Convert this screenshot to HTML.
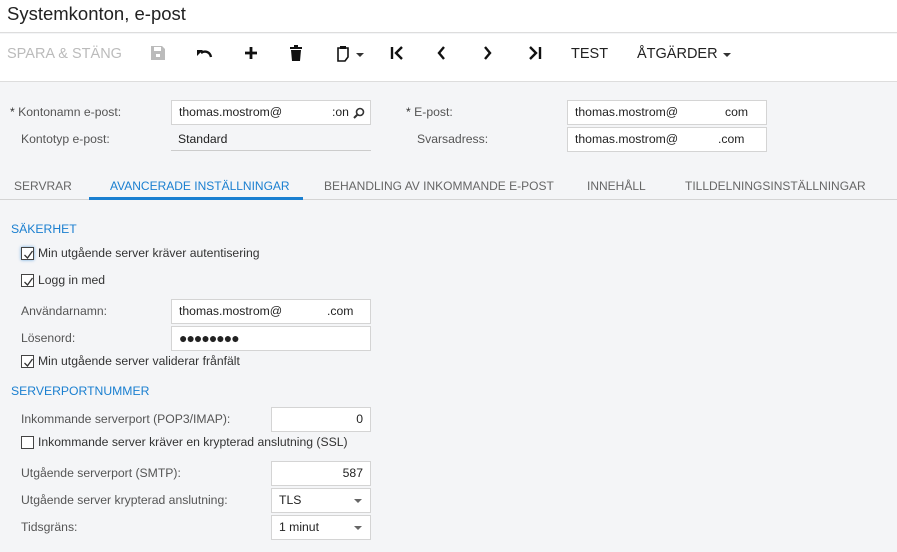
<!DOCTYPE html>
<html><head><meta charset="utf-8"><style>
*{margin:0;padding:0;box-sizing:border-box}
body{width:897px;height:552px;overflow:hidden;background:#f4f5f7;font-family:"Liberation Sans",Arial,sans-serif;font-size:12.2px;color:#333;position:relative}
.a{position:absolute;white-space:nowrap}
.lbl{color:#555}
.box{position:absolute;background:#fff;border:1px solid #d4d4d4;height:25px;padding:0 7px;line-height:23px;color:#222;white-space:nowrap;overflow:hidden}
.cb{position:absolute;width:13px;height:13px;border:1px solid #444;background:#fff}
.cb svg{position:absolute;left:1px;top:1px}
.sec{color:#1a7fd0;font-size:12.2px}
.tab{position:absolute;top:179px;color:#666;font-size:12px}
.ic{position:absolute;top:45px}
.caret{position:absolute;width:0;height:0;border-left:4px solid transparent;border-right:4px solid transparent;border-top:4px solid #666}
</style></head><body>
<div class="a" style="left:0;top:0;width:897px;height:33px;background:#fff;border-bottom:1px solid #ddd"></div>
<div class="a" style="left:7px;top:3px;font-size:18.5px;color:#222">Systemkonton, e-post</div>
<div class="a" style="left:0;top:34px;width:897px;height:48px;background:#fff;border-bottom:1px solid #ddd"></div>
<div class="a" style="left:7px;top:46px;font-size:14.5px;color:#bbb">SPARA &amp; STÄNG</div>
<svg class="ic" style="left:150px" width="16" height="16" viewBox="0 0 16 16"><path d="M1 1h11l3 3v11H1z" fill="#bbb"/><rect x="4" y="2" width="7" height="4" fill="#fff"/><rect x="6" y="9" width="4" height="3" fill="#fff"/></svg>
<svg class="ic" style="left:196px" width="18" height="16" viewBox="0 0 18 16"><path d="M15 12C14 7 9 5 5 8" stroke="#111" stroke-width="2.4" fill="none"/><path d="M1 5l6 0-6 6z" fill="#111"/></svg>
<svg class="ic" style="left:243px" width="16" height="16" viewBox="0 0 16 16"><path d="M8 2v12M2 8h12" stroke="#111" stroke-width="2.8"/></svg>
<svg class="ic" style="left:289px" width="14" height="16" viewBox="0 0 14 16"><rect x="1" y="2" width="12" height="2" fill="#111"/><rect x="5" y="0" width="4" height="2" fill="#111"/><path d="M2 5h10l-1 11H3z" fill="#111"/></svg>
<svg class="ic" style="left:336px" width="14" height="17" viewBox="0 0 14 17"><path d="M2 3h10v9l-3 4H2z" stroke="#111" stroke-width="1.6" fill="none"/><rect x="4" y="1" width="6" height="3" fill="#111"/></svg>
<div class="caret" style="left:356px;top:53px;border-top-color:#333"></div>
<svg class="ic" style="left:390px" width="14" height="16" viewBox="0 0 14 16"><path d="M2 2v12" stroke="#111" stroke-width="2.4"/><path d="M12 2L6 8l6 6" stroke="#111" stroke-width="2.4" fill="none"/></svg>
<svg class="ic" style="left:435px" width="12" height="16" viewBox="0 0 12 16"><path d="M9 2L4 8l5 6" stroke="#111" stroke-width="2.4" fill="none"/></svg>
<svg class="ic" style="left:482px" width="12" height="16" viewBox="0 0 12 16"><path d="M3 2l5 6-5 6" stroke="#111" stroke-width="2.4" fill="none"/></svg>
<svg class="ic" style="left:528px" width="14" height="16" viewBox="0 0 14 16"><path d="M2 2l6 6-6 6" stroke="#111" stroke-width="2.4" fill="none"/><path d="M12 2v12" stroke="#111" stroke-width="2.4"/></svg>
<div class="a" style="left:571px;top:46px;font-size:14.5px;color:#222">TEST</div>
<div class="a" style="left:637px;top:46px;font-size:14.5px;color:#222">ÅTGÄRDER</div>
<div class="caret" style="left:723px;top:53px;border-top-color:#333"></div>

<div class="a lbl" style="left:10px;top:105px"><span style="color:#333">*</span> Kontonamn e-post:</div>
<div class="box" style="left:171px;top:100px;width:200px">thomas.mostrom@<span style="position:absolute;left:160px">:on</span>
<svg style="position:absolute;right:5px;top:6px" width="12" height="12" viewBox="0 0 12 12"><circle cx="7" cy="5" r="3.5" stroke="#333" stroke-width="1.6" fill="none"/><path d="M4.5 7.5L1 11" stroke="#333" stroke-width="2"/></svg></div>
<div class="a lbl" style="left:21px;top:132px">Kontotyp e-post:</div>
<div class="a" style="left:178px;top:132px;color:#222">Standard</div>
<div class="a" style="left:171px;top:150px;width:200px;height:1px;background:#ccc"></div>
<div class="a lbl" style="left:406px;top:105px"><span style="color:#333">*</span> E-post:</div>
<div class="box" style="left:567px;top:100px;width:200px">thomas.mostrom@<span style="position:absolute;left:157px">com</span></div>
<div class="a lbl" style="left:417px;top:132px">Svarsadress:</div>
<div class="box" style="left:567px;top:127px;width:200px">thomas.mostrom@<span style="position:absolute;left:150px">.com</span></div>

<div class="tab" style="left:14px">SERVRAR</div>
<div class="tab" style="left:110px;color:#1a7fd0">AVANCERADE INSTÄLLNINGAR</div>
<div class="tab" style="left:324px">BEHANDLING AV INKOMMANDE E-POST</div>
<div class="tab" style="left:587px">INNEHÅLL</div>
<div class="tab" style="left:685px">TILLDELNINGSINSTÄLLNINGAR</div>
<div class="a" style="left:0;top:199px;width:897px;height:1px;background:#d4d4d4"></div>
<div class="a" style="left:89px;top:197px;width:214px;height:3px;background:#1a7fd0"></div>

<div class="a sec" style="left:11px;top:222px">SÄKERHET</div>
<div class="cb" style="left:21px;top:247px;box-shadow:0 0 3px #6aa8e0"><svg width="11" height="11"><path d="M1.5 6l3 3 5-7" stroke="#333" stroke-width="1.3" fill="none"/></svg></div>
<div class="a" style="left:38px;top:246px">Min utgående server kräver autentisering</div>
<div class="cb" style="left:21px;top:274px"><svg width="11" height="11"><path d="M1.5 6l3 3 5-7" stroke="#333" stroke-width="1.3" fill="none"/></svg></div>
<div class="a" style="left:38px;top:273px">Logg in med</div>
<div class="a lbl" style="left:21px;top:304px">Användarnamn:</div>
<div class="box" style="left:171px;top:299px;width:200px">thomas.mostrom@<span style="position:absolute;left:155px">.com</span></div>
<div class="a lbl" style="left:21px;top:331px">Lösenord:</div>
<div class="box" style="left:171px;top:326px;width:200px;font-size:14px;letter-spacing:-1px">●●●●●●●●</div>
<div class="cb" style="left:21px;top:355px"><svg width="11" height="11"><path d="M1.5 6l3 3 5-7" stroke="#333" stroke-width="1.3" fill="none"/></svg></div>
<div class="a" style="left:38px;top:354px">Min utgående server validerar frånfält</div>

<div class="a sec" style="left:11px;top:384px">SERVERPORTNUMMER</div>
<div class="a lbl" style="left:21px;top:412px">Inkommande serverport (POP3/IMAP):</div>
<div class="box" style="left:271px;top:407px;width:100px;text-align:right">0</div>
<div class="cb" style="left:21px;top:436px"></div>
<div class="a" style="left:38px;top:435px">Inkommande server kräver en krypterad anslutning (SSL)</div>
<div class="a lbl" style="left:21px;top:466px">Utgående serverport (SMTP):</div>
<div class="box" style="left:271px;top:461px;width:100px;text-align:right">587</div>
<div class="a lbl" style="left:21px;top:493px">Utgående server krypterad anslutning:</div>
<div class="box" style="left:271px;top:488px;width:100px">TLS</div>
<div class="caret" style="left:354px;top:499px"></div>
<div class="a lbl" style="left:21px;top:520px">Tidsgräns:</div>
<div class="box" style="left:271px;top:515px;width:100px">1 minut</div>
<div class="caret" style="left:354px;top:526px"></div>
</body></html>
